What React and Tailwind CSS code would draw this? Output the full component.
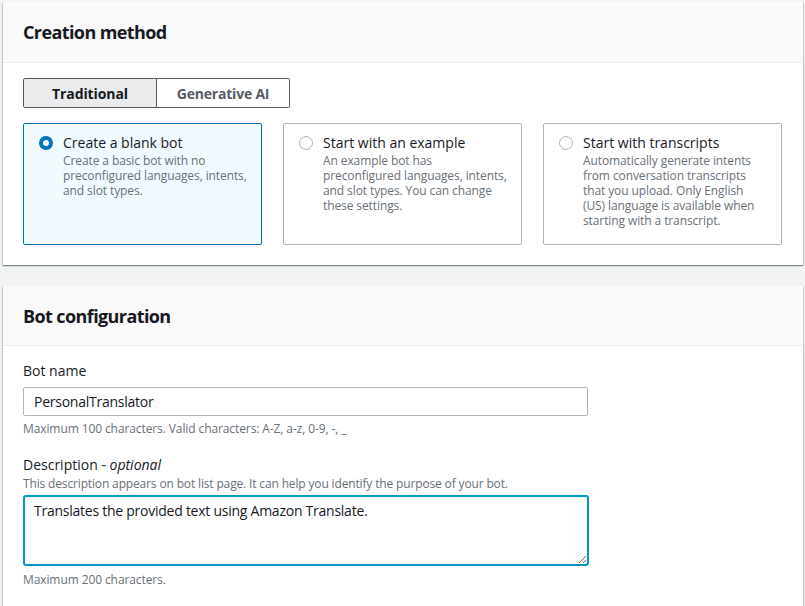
import React from 'react';

const tiles = [
    {
        id: 'blank',
        title: 'Create a blank bot',
        lines: ['Create a basic bot with no', 'preconfigured languages, intents,', 'and slot types.'],
    },
    {
        id: 'example',
        title: 'Start with an example',
        lines: ['An example bot has', 'preconfigured languages, intents,', 'and slot types. You can change', 'these settings.'],
    },
    {
        id: 'transcripts',
        title: 'Start with transcripts',
        lines: [
            'Automatically generate intents',
            'from conversation transcripts',
            'that you upload. Only English',
            '(US) language is available when',
            'starting with a transcript.',
        ],
    },
];

function Card({ title, children, headerHeight = 'h-[61px]', className = '' }) {
    return (
        <div className={`bg-white shadow-[0_1px_1px_0_rgba(0,28,36,0.3),1px_1px_1px_0_rgba(0,28,36,0.15),-1px_1px_1px_0_rgba(0,28,36,0.15)] ${className}`}>
            <div className={`${headerHeight} px-5 flex items-center bg-[#fafafa] border-b border-[#eaeded]`}>
                <h2 className="text-[18px] font-bold text-[#16191f] leading-[22px] tracking-[-0.6px]">{title}</h2>
            </div>
            {children}
        </div>
    );
}

function Tile({ tile, selected }) {
    return (
        <div
            className={`h-[122px] rounded-[2px] border pl-[15px] pr-2 pt-[9px] flex gap-[10px] ${
                selected ? 'bg-[#f1faff] border-[#0073bb]' : 'bg-white border-[#aab7b8]'
            }`}
        >
            <div className="pt-[3px] shrink-0">
                {selected ? (
                    <div className="w-[14px] h-[14px] rounded-full border-[4px] border-[#0073bb] bg-white" />
                ) : (
                    <div className="w-[14px] h-[14px] rounded-full border border-[#aab7b8] bg-white" />
                )}
            </div>
            <div className="min-w-0">
                <div className="text-[14px] leading-[20px] text-[#16191f]">{tile.title}</div>
                <p className="text-[12px] leading-[15px] text-[#687078] tracking-[-0.1px] whitespace-nowrap">
                    {tile.lines.map((l, i) => (
                        <React.Fragment key={l}>
                            {i > 0 && <br />}
                            {l}
                        </React.Fragment>
                    ))}
                </p>
            </div>
        </div>
    );
}

export default function App() {
    return (
        <div className="h-[606px] overflow-hidden bg-[#f2f3f3] pl-[3px] pt-[2px] pr-[2px] flex flex-col gap-[21px] font-['Open_Sans',sans-serif]">
            <Card title="Creation method">
                <div className="px-5 pt-[15px] pb-5">
                    <div className="flex">
                        <button className="w-[134px] h-[30px] border border-[#545b64] rounded-l-[2px] bg-[#e9ebed] text-[14px] font-bold text-[#16191f] tracking-[-0.1px]">
                            Traditional
                        </button>
                        <button className="w-[133px] h-[30px] border border-l-0 border-[#545b64] rounded-r-[2px] bg-white text-[14px] font-bold text-[#545b64] tracking-[-0.2px]">
                            Generative AI
                        </button>
                    </div>
                    <div className="mt-[15px] grid grid-cols-3 gap-[21px] pr-[1px]">
                        {tiles.map((t, i) => (
                            <Tile key={t.id} tile={t} selected={i === 0} />
                        ))}
                    </div>
                </div>
            </Card>

            <Card title="Bot configuration" headerHeight="h-[60px]" className="flex-1">
                <div className="px-5 pt-[15px]">
                    <label className="block text-[14px] leading-[20px] text-[#16191f]">Bot name</label>
                    <div className="mt-[6px] w-[565px] h-[29px] border border-[#aab7b8] rounded-[2px] flex items-center px-[10px] text-[14px] text-[#16191f] tracking-[-0.25px]">
                        PersonalTranslator
                    </div>
                    <p className="mt-[5px] text-[12px] leading-[16px] text-[#687078] tracking-[-0.1px]">
                        Maximum 100 characters. Valid characters: A-Z, a-z, 0-9, -, _
                    </p>

                    <label className="block mt-[18px] text-[14px] leading-[20px] text-[#16191f]">
                        Description - <i>optional</i>
                    </label>
                    <p className="mt-[2px] text-[12px] leading-[14px] text-[#687078] tracking-[-0.15px]">
                        This description appears on bot list page. It can help you identify the purpose of your bot.
                    </p>
                    <textarea
                        className="mt-[4px] block w-[566px] h-[71px] border-2 border-[#0099c6] rounded-[3px] px-[9px] py-[4px] text-[14px] leading-[20px] text-[#16191f] tracking-[-0.25px] outline-none"
                        defaultValue="Translates the provided text using Amazon Translate."
                    />
                    <p className="mt-[6px] text-[12px] leading-[16px] text-[#687078] tracking-[-0.1px]">Maximum 200 characters.</p>
                </div>
            </Card>
        </div>
    );
}
